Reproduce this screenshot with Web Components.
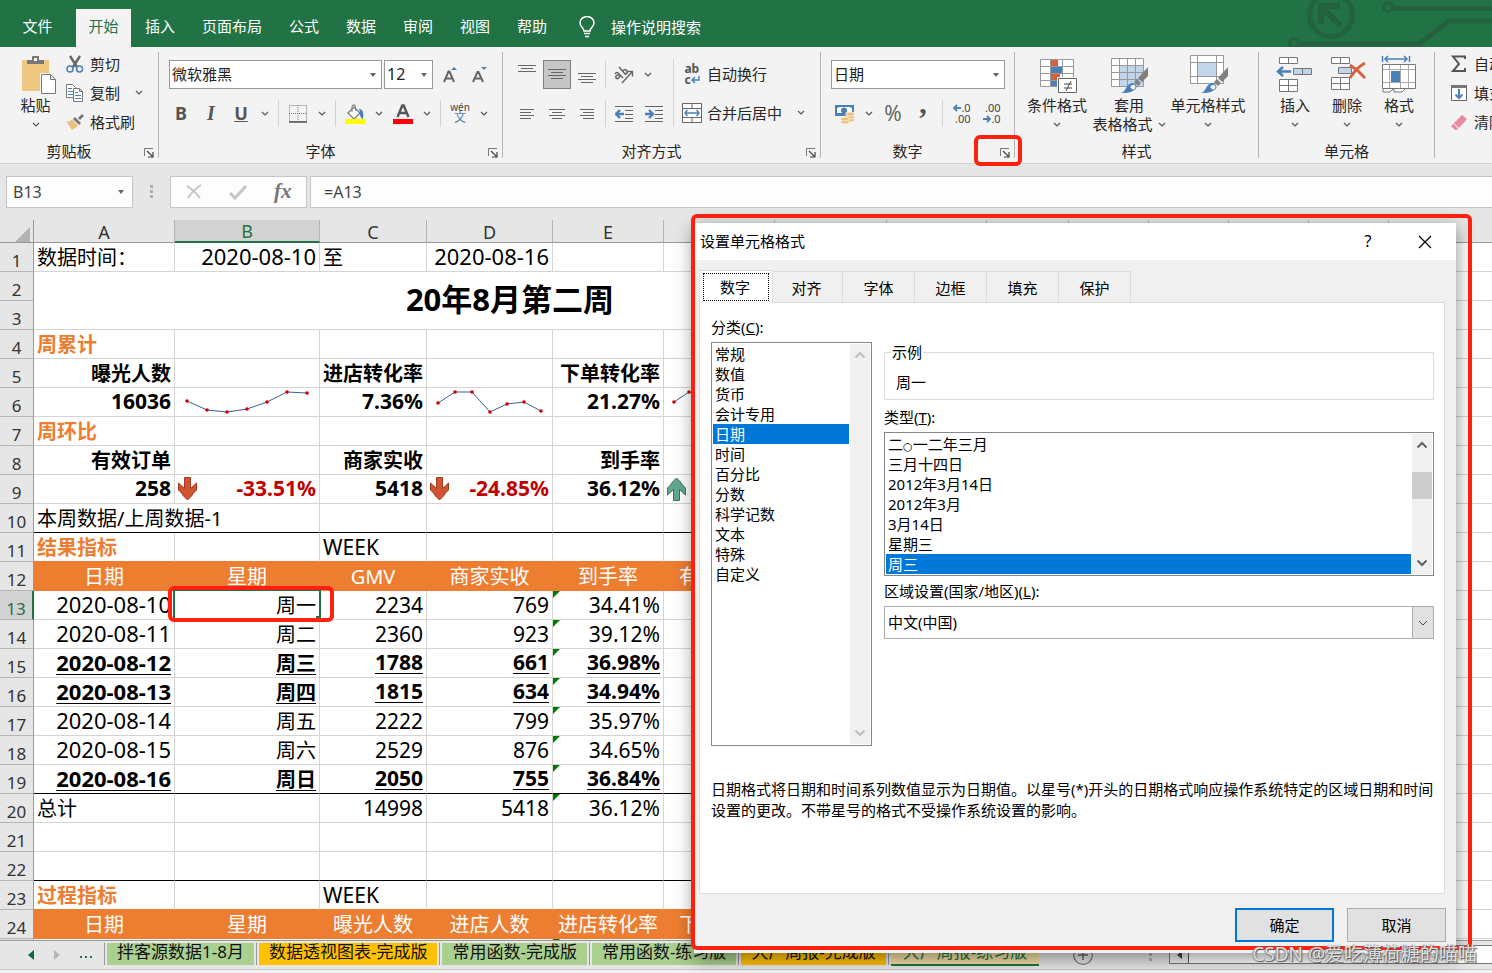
<!DOCTYPE html>
<html lang="zh-CN">
<head>
<meta charset="utf-8">
<title>Excel - 设置单元格格式</title>
<style>
html,body{margin:0;height:100%}
body{font:15px/20px "Noto Sans","Noto Sans CJK SC",sans-serif;color:#262626;overflow:hidden;background:#e6e6e6}
</style>
</head>
<body>
<excel-window></excel-window>
<script>
const BASE = `*{box-sizing:border-box}
button,input,select{font:inherit;color:inherit;margin:0;padding:0;border:0;background:none;border-radius:0;outline:0;appearance:none;line-height:inherit}
button{display:inline-flex;align-items:center;justify-content:center;white-space:nowrap}`;

class Base extends HTMLElement {
  connectedCallback() {
    if (this.shadowRoot) return;
    this.attachShadow({mode: 'open'}).innerHTML = `<style>${BASE}${this.css()}</style>${this.html()}`;
  }
  a(n, d = '') { return this.getAttribute(n) ?? d; }
  css() { return ''; }
  html() { return '<slot></slot>'; }
}

/* ---------- icons ---------- */
const lines = (list, c = '#666') => list.map(([x, y, w]) => `<path d="M${x} ${y + .5}h${w}" stroke="${c}"/>`).join('');
const brush = (x, y) => `<g transform="translate(${x} ${y})"><path d="M27 0v9l-6 6-4-4z" fill="#808080"/><path d="M16 12l4 4-3 3-4-4z" fill="#808080"/><path d="M0 26c5-1 5-9 11-10 4 0 5 4 3 6-3 4-9 4-14 4z" fill="#4a7fb8"/><path d="M9 20c0-3 6-4 6 0 0 2-2 3-3 3" fill="#f3f3f3" stroke="#4a7fb8"/></g>`;
const ICONS = {
  chev: [8, 5, `<path d="M1 1l3 3 3-3" fill="none" stroke="#555" stroke-width="1.2"/>`],
  caret: [8, 4, `<path d="M1 0h6l-3 4z" fill="#666"/>`],
  bulb: [16, 22, `<path d="M5 15c0-3-4-4-4-8a7 6.500 0 0 1 14 0c0 4-4 5-4 8zM5 17.500h6M6 20.500h4" fill="none" stroke="#fff" stroke-width="1.500"/>`],
  paste: [41, 40, `<g transform="translate(5 0)"><path d="M2 5h27v31H2z" fill="#edc87e"/><path d="M7 5h5V2q0-1 1-1h5q1 0 1 1v3h5v4H7z" fill="#777"/><path d="M14 3h3v3h-3z" fill="#f3f3f3"/><path d="M20 18h11l6 6v16H20z" fill="#f3f3f3"/><path d="M21.500 19.500h9l5 5v14h-14zM30.500 19.500v5h5" fill="#fff" stroke="#777"/></g>`],
  cut: [18, 18, `<path d="M4 1l7 11M14 1L7 12" stroke="#666" stroke-width="2.400" fill="none"/><circle cx="4" cy="14" r="3" fill="none" stroke="#4a7fb8" stroke-width="1.500"/><circle cx="13.500" cy="14" r="3" fill="none" stroke="#4a7fb8" stroke-width="1.500"/>`],
  copy: [18, 18, `<path d="M.5.5h6l3 3v10h-9z" fill="#fff" stroke="#777"/><path d="M2 4.500h4M2 7.500h5M2 10.500h5" stroke="#4a7fb8"/><path d="M7.500 4.500h6l3 3v10h-9zM13.500 4.500v3h3" fill="#fff" stroke="#777"/><path d="M9 8.500h3M9 11.500h6M9 14.500h6" stroke="#4a7fb8"/>`],
  brush: [18, 16, `<path d="M9 3l6 6-2 2-6-6z" fill="#777"/><path d="M12 4l4-4 2 2-4 4z" fill="#777"/><path d="M6 5l6 7c-2 1-4 3-6 4L0 7c3 1 5 0 6-2z" fill="#edc07a"/>`],
  grow: [16, 18, `<path d="M3 16L7.500 5.500h1L13 16M4.500 12.500h7" fill="none" stroke="#666" stroke-width="2"/><path d="M10 4l3-3 3 3z" fill="#4a7fb8"/>`],
  shrink: [16, 18, `<path d="M2 16L6.500 6h1L12 16M3.500 12.500h7" fill="none" stroke="#666" stroke-width="2"/><path d="M10 1h6l-3 3z" fill="#4a7fb8"/>`],
  border: [18, 18, `<path d="M.5.5h17v16H.5zM9 0v16M0 8.500h18" fill="none" stroke="#777" stroke-dasharray="1 1"/><path d="M0 17h18" stroke="#555" stroke-width="1.500"/>`],
  fill: [20, 20, `<path d="M3 9l6-6 6 6-6 6z" fill="#fff" stroke="#777" stroke-width="1.200"/><path d="M7 8V3q0-3 3-2l1 6" fill="none" stroke="#777"/><path d="M14 5c4 0 5 4 4 10-2-1-4-4-3-7z" fill="#4a7fb8"/><path d="M0 15h20v5H0z" fill="#ff0"/>`],
  color: [20, 20, `<path d="M4.500 13L9.300 1.500h1.400L15.500 13M6 9h8" fill="none" stroke="#555" stroke-width="2.400"/><path d="M0 15h20v5H0z" fill="red"/>`],
  top: [18, 30, lines([[0, 5, 18], [3, 8, 12], [0, 11, 18]])],
  middle: [18, 30, lines([[0, 9, 18], [3, 12, 12], [0, 15, 18], [3, 18, 12]])],
  bottom: [18, 30, lines([[0, 13, 18], [3, 16, 12], [0, 19, 18], [3, 22, 12]])],
  left: [14, 12, lines([[0, 1, 14], [0, 4, 11], [0, 7, 14], [0, 10, 11]])],
  center: [16, 12, lines([[0, 1, 16], [3, 4, 10], [0, 7, 16], [3, 10, 10]])],
  right: [14, 12, lines([[0, 1, 14], [3, 4, 11], [0, 7, 14], [3, 10, 11]])],
  orient: [20, 18, `<path d="M8 17L18 6M18.500 10.500V5.500H13.500" fill="none" stroke="#666" stroke-width="1.400"/><g fill="none" stroke="#666" stroke-width="1.600"><path d="M1 8q2-3 4 0l4 4M5 9q-4 0-3 3 2 2 4-2"/><path d="M5 1l7 8M9 5q2-3 4 0 1 3-2 3"/></g>`],
  outdent: [18, 18, lines([[0, 1, 18], [10, 5, 8], [10, 9, 8], [10, 13, 8], [0, 16, 18]]) + `<path d="M9 9H2M5 5L1 9l4 4" fill="none" stroke="#4a7fb8" stroke-width="2.400"/>`],
  indent: [18, 18, lines([[0, 1, 18], [10, 5, 8], [10, 9, 8], [10, 13, 8], [0, 16, 18]]) + `<path d="M0 9h7M4 5l4 4-4 4" fill="none" stroke="#4a7fb8" stroke-width="2.400"/>`],
  ret: [9, 8, `<path d="M8 0v4H1M4 1L1 4l3 3" fill="none" stroke="#4a7fb8" stroke-width="1.400"/>`],
  merge: [20, 20, `<path d="M.5.500h19v19H.5zM.5 5.500h19M.5 14.500h19M10 0v5M10 15v5" fill="#fff" stroke="#666"/><path d="M3 10h14M5.500 7L3 10l2.500 3M14.500 7l2.500 3-2.500 3" fill="none" stroke="#4a7fb8" stroke-width="1.400"/>`],
  money: [20, 20, `<path d="M0 1h19v11H0z" fill="#4a7fb8"/><path d="M2 4l3-1h9l3 1v5H2z" fill="#fff"/><circle cx="9" cy="6.500" r="3" fill="#4a7fb8"/><g fill="#edc07a" stroke="#fff" stroke-width=".7"><ellipse cx="15" cy="16" rx="4.500" ry="2"/><ellipse cx="15" cy="13" rx="4.500" ry="2"/><ellipse cx="15" cy="10" rx="4.500" ry="2"/><ellipse cx="10" cy="18" rx="4.500" ry="2"/><ellipse cx="10" cy="15" rx="4.500" ry="2"/></g>`],
  arrL: [8, 8, `<path d="M8 4H1M4 1L1 4l3 3" fill="none" stroke="#4a7fb8" stroke-width="1.800"/>`],
  arrR: [8, 8, `<path d="M0 4h7M4 1l3 3-3 3" fill="none" stroke="#4a7fb8" stroke-width="1.800"/>`],
  launch: [10, 10, `<path d="M.5 8V.5H9" fill="none" stroke="#777"/><path d="M3 3l6 6M9 4v5H4" fill="none" stroke="#444" stroke-width="1.200"/>`],
  cond: [42, 38, `<g transform="translate(4 0)"><path d="M.5 4.500h33v27H.5z" fill="#fff"/><path d="M11 5h7v6h-7zM11 19h9v6h-9z" fill="#d6603a"/><path d="M11 12h11v6H11zM11 26h6v5h-6z" fill="#4a7fb8"/><path d="M.5 4.500h33v27H.5zM.5 11.500h33M.5 18.500h33M.5 25.500h33M10.500 4v27M22.500 4v27" fill="none" stroke="#999"/><path d="M17 22h20v16H17z" fill="#f3f3f3"/><path d="M18.500 23.500h18v14h-18z" fill="#fff" stroke="#666"/><path d="M24 29h8M24 33h8M31 26l-5 10" stroke="#444"/></g>`],
  table: [38, 38, `<g transform="translate(1 0)"><path d="M.5 3.500h32v28H.5z" fill="#fff"/><path d="M9 11h23v20H9z" fill="#c3d5ea"/><path d="M.5 3.500h32v28H.5zM.5 10.500h32M.5 17.500h32M.5 24.500h32M8.500 3v28M16.500 3v28M24.500 3v28" fill="none" stroke="#999"/>${brush(10, 12)}</g>`],
  cell: [40, 38, `<g transform="translate(2 0)"><path d="M.5.500h33v28H.5zM.5 7.500h33M.5 21.500h33M7.500 0v28M26.500 0v28" fill="#fff" stroke="#999"/><path d="M8 8h18v13H8z" fill="#c3d5ea"/>${brush(11, 12)}</g>`],
  insert: [38, 38, `<path d="M3.500 2.500h18v6h-18zM12.500 2v6M3.500 24.500h18v12h-18zM12.500 24v12M3.500 30.500h18" fill="#fff" stroke="#777"/><path d="M17.500 13.500h18v6h-18zM26.500 13v6" fill="#c3d5ea" stroke="#777"/><path d="M15 16.500H3M7 12l-5 4.500L7 21" fill="none" stroke="#4a7fb8" stroke-width="2.500"/>`],
  del: [38, 38, `<path d="M3.500 2.500h18v6h-18zM12.500 2v6M3.500 22.500h18v12h-18zM12.500 22v12M3.500 28.500h18" fill="#fff" stroke="#777"/><path d="M10.500 12.500h13v6h-13z" fill="#c3d5ea" stroke="#777"/><path d="M22 10q8 5 15 13M37 8q-9 5-15 15" fill="none" stroke="#d6603a" stroke-width="2.800"/>`],
  format: [38, 38, `<path d="M2.500 1v6M29.500 1v6M5 4h22M8 1L5 4l3 3M24 1l3 3-3 3" fill="none" stroke="#4a7fb8" stroke-width="1.500"/><path d="M2.500 9.500h33v24h-33z" fill="#fff"/><path d="M2.500 14.500h33M2.500 27.500h33M9.500 9v24M20.500 9v24M28.500 9v24" stroke="#aaa"/><path d="M2.500 9.500h33v24h-33z" fill="none" stroke="#777"/><path d="M11 16h9v11h-9z" fill="#4a7fb8"/><path d="M3 34v3h7l3-3h1v3h8l3-3" fill="#fff" stroke="#777"/>`],
  sum: [18, 18, `<path d="M15 4V1.500H3L9 9l-6 7h12v-3" fill="none" stroke="#555" stroke-width="2"/>`],
  down: [18, 18, `<path d="M1.500 1.500h15v15h-15z" fill="#fff" stroke="#666"/><path d="M1 1h16v3H1z" fill="#777"/><path d="M9 5v9M5.500 10.500L9 14l3.500-3.500" fill="none" stroke="#4a7fb8" stroke-width="2"/>`],
  eraser: [18, 18, `<path d="M12 2l5 4-8 9-5-5z" fill="#e98a9d"/><path d="M3.500 10.500l4.500 5-2 2-5-4z" fill="#e98a9d"/>`],
  cancel: [16, 16, `<path d="M1 2q8 5 13 12M15 1Q7 6 2 14" fill="none" stroke="#c4c4c4" stroke-width="2"/>`],
  ok: [18, 16, `<path d="M1 9l5 5L17 2" fill="none" stroke="#c4c4c4" stroke-width="3"/>`],
  dots: [3, 14, `<path d="M0 0h3v3H0zM0 5h3v3H0zM0 10h3v3H0z" fill="#b0b0b0"/>`],
  navL: [6, 10, `<path d="M6 0v10L0 5z" fill="#0f6b3a"/>`],
  navR: [6, 10, `<path d="M0 0v10l6-5z" fill="#b8b8b8"/>`],
  more: [13, 6, `<path d="M0 4h2v2H0zM5 4h2v2H5zM10 4h2v2h-2z" fill="#217346"/>`],
  plus: [20, 20, `<circle cx="10" cy="10" r="9.300" fill="none" stroke="#777" stroke-width="1.200"/><path d="M10 5v10M5 10h10" stroke="#666" stroke-width="1.500"/>`],
  scrollL: [5, 8, `<path d="M5 0v8L0 4z" fill="#444"/>`],
  close: [14, 14, `<path d="M1 1l12 12M13 1L1 13" stroke="#000" stroke-width="1.200"/>`],
  upOff: [12, 8, `<path d="M1.500 6.500L6 2l4.500 4.500" fill="none" stroke="#bfbfbf" stroke-width="2"/>`],
  downOff: [12, 8, `<path d="M1.500 1.500L6 6l4.500-4.500" fill="none" stroke="#bfbfbf" stroke-width="2"/>`],
  up: [12, 8, `<path d="M1.500 6.500L6 2l4.500 4.500" fill="none" stroke="#606060" stroke-width="2"/>`],
  dn: [12, 8, `<path d="M1.500 1.500L6 6l4.500-4.500" fill="none" stroke="#606060" stroke-width="2"/>`],
  combo: [10, 6, `<path d="M1 1l4 4 4-4" fill="none" stroke="#444"/>`],
  fall: [20, 24, `<path d="M6.500.5h6v11L18.500 6v7l-3 3-2 3-4 4-4-4-2-3-3-3V6l6 5.500z" fill="#d35230" stroke="#9e3d24"/>`],
  rise: [20, 24, `<path d="M6.500 23.500h6v-11L18.500 18v-7l-3-3-2-3-4-4-4 4-2 3-3 3v7l6-5.500z" fill="#64a78e" stroke="#37765e"/>`]
};
customElements.define('x-icon', class extends Base {
  css() { return ':host{display:inline-flex;flex:none}svg{display:block}'; }
  html() { const [w, h, d] = ICONS[this.a('name')]; return `<svg width="${w}" height="${h}" viewBox="0 0 ${w} ${h}" aria-hidden="true">${d}</svg>`; }
});

/* ---------- ribbon parts ---------- */
customElements.define('x-tool', class extends Base {
  css() { return `:host{display:inline-flex;flex:none;width:28px;height:29px}
    button{width:100%;height:100%}
    :host([label]:not([icon])) button{padding-bottom:2px}
    :host([pressed]) button{background:#c6c6c6;border:1px solid #808080}
    :host([drop]){width:16px}`; }
  html() { return `<button aria-label="${this.a('label')}">${this.hasAttribute('drop') ? '<x-icon name="chev"></x-icon>' : this.a('icon') ? `<x-icon name="${this.a('icon')}"></x-icon>` : '<slot></slot>'}</button>`; }
});
customElements.define('x-sep', class extends Base {
  css() { return ':host{display:block;flex:none;width:1px;height:27px;margin:0 3px;background:#d2d2d2}'; }
  html() { return ''; }
});
customElements.define('x-row-tool', class extends Base {
  css() { return `:host{display:flex;height:29px;align-items:center}
    button{gap:6px;height:100%;padding-bottom:2px}.i{width:18px;display:flex;justify-content:center}.c{margin-left:9px}`; }
  html() { return `<button><span class="i"><slot name="icon"><x-icon name="${this.a('icon', 'chev')}"></x-icon></slot></span><slot></slot>${this.hasAttribute('menu') ? '<x-icon class="c" name="chev"></x-icon>' : ''}</button>`; }
});
customElements.define('x-big', class extends Base {
  css() { return `:host{display:block;flex:none}
    button{flex-direction:column;justify-content:flex-start;width:100%;padding-top:5px}
    .i{height:40px;display:flex;align-items:flex-start}
    .second{display:flex;align-items:center;gap:5px;height:18px}`; }
  html() { return `<button><span class="i"><x-icon name="${this.a('icon')}"></x-icon></span><span><slot></slot></span><span class="second"><slot name="second"></slot><x-icon name="chev"></x-icon></span></button>`; }
});
customElements.define('x-combo', class extends Base {
  css() { return `:host{display:block;flex:none;position:relative;height:29px}
    select{width:100%;height:100%;background:#fff;border:1px solid #999;padding:0 20px 2px 2px;color:#222}
    x-icon{position:absolute;right:5px;top:13px;pointer-events:none}`; }
  html() { return `<select aria-label="${this.a('label')}"><option>${this.a('value')}</option></select><x-icon name="caret"></x-icon>`; }
});
customElements.define('x-mark', class extends Base {
  css() { return ':host{display:block;position:absolute;border:4px solid #ff2010;border-radius:6px;pointer-events:none;z-index:3}'; }
  html() { return ''; }
});
customElements.define('x-group', class extends Base {
  css() { return `:host{display:grid;grid-template-rows:87px 26px;flex:none;padding-top:3px;position:relative}
    :host::after{content:"";position:absolute;right:0;top:5px;bottom:5px;width:1px;background:#b5b5b5}
    :host([last])::after{display:none}
    .foot{display:flex;align-items:center}
    .foot span{flex:1;text-align:center;padding:2px 1px 0 0}
    .foot button{width:20px;height:20px;position:relative;padding-top:5px}
    x-mark{inset:-5px -7px -6px -21px}`; }
  html() { return `<slot></slot><div class="foot"><span>${this.a('label')}</span>${this.hasAttribute('launcher') ? `<button aria-label="${this.a('label')}设置"><x-icon name="launch"></x-icon>${this.hasAttribute('marked') ? '<x-mark></x-mark>' : ''}</button>` : ''}</div>`; }
});

customElements.define('excel-tabs', class extends Base {
  css() { return `:host{display:flex;height:47px;flex:none;background:#217346;color:#fff;padding-top:9px;position:relative;overflow:hidden}
    nav{display:flex;gap:1px}
    button{padding:0 13px 4px;height:38px}
    .file{width:75px}.on{background:#f3f3f3;color:#217346;width:55px}
    .tell{margin-left:19px;padding:0 0 3px;gap:16px}
    .art{position:absolute;right:0;top:0}`; }
  html() { return `<svg class="art" width="212" height="47" viewBox="0 0 212 47" fill="none" stroke="#23613f" stroke-width="5" aria-hidden="true"><circle cx="51" cy="15" r="21.500"/><path d="M41 24V6h19M43 8l17 18" stroke-width="6"/><circle cx="108" cy="7" r="4.500" stroke-width="3"/><path d="M113 8.500h99"/><circle cx="14" cy="43" r="4.500" stroke-width="3"/><path d="M19 44h120l30-23h43" stroke-width="5"/></svg>
    <nav><button class="file">文件</button><button class="on">开始</button>${['插入', '页面布局', '公式', '数据', '审阅', '视图', '帮助'].map(t => `<button>${t}</button>`).join('')}</nav>
    <button class="tell"><x-icon name="bulb"></x-icon>操作说明搜索</button>`; }
});

customElements.define('excel-ribbon', class extends Base {
  css() { return `:host{display:flex;flex:none;height:117px;background:#f3f3f3;border-bottom:1px solid #d2d2d2;overflow:visible}
    .clip{width:159px}.font{width:344px}.align{width:318px}.num{width:194px}.sty{width:244px}.cells{width:176px}.edit{flex:1;min-width:0;overflow:hidden}
    .h{display:flex}.stack{display:flex;flex-direction:column}
    .tools{display:grid;grid-template-rows:29px 29px;row-gap:10px;padding-top:10px;align-content:start}
    .r{display:flex;align-items:center;gap:2px}
    .clip .h{padding-left:10px;gap:5px}
    .paste{width:51px}
    .font .tools{padding-left:8px}.font .r:first-child{padding-left:2px}
    .name{width:213px}.size{width:49px;font-size:16px}
    .align .h{padding-left:10px}.align x-sep{margin:0 2px}.align x-sep.tall{height:68px;margin:9px 9px 0 5px}
    .num .tools{padding-left:10px}.fmt{width:174px}
    .sty .h{padding-left:7px}.w70{width:70px}.w74{width:74px;margin-right:2px}.w80{width:80px}
    .cells .h{padding-left:10px}.cells x-big{width:52px}
    .edit .stack{padding-left:15px}
    b,i,u{font-size:18px;color:#555;font-weight:700}
    i{font-family:"Liberation Serif",serif;font-size:20px}
    .pct{font-size:21px;color:#666}.comma{font:700 30px/20px "Liberation Serif",serif;color:#555;padding-bottom:20px}
    .dec{font-size:11px;line-height:11px;color:#444;text-align:right}
    .wen{font-size:10px;line-height:10px;color:#444;text-align:center}.wen em{display:block;font-style:normal;font-size:12px;line-height:12px;color:#4a7fb8}
    .ab{font-size:12px;line-height:11px;color:#555;text-align:left;font-weight:700}`; }
  html() { return `
  <x-group class="clip" label="剪贴板" launcher><div class="h"><x-big class="paste" icon="paste">粘贴</x-big>
    <div class="stack"><x-row-tool icon="cut">剪切</x-row-tool><x-row-tool icon="copy" menu>复制</x-row-tool><x-row-tool icon="brush">格式刷</x-row-tool></div></div></x-group>
  <x-group class="font" label="字体" launcher><div class="tools">
    <div class="r"><x-combo class="name" label="字体" value="微软雅黑"></x-combo><x-combo class="size" label="字号" value="12"></x-combo><x-tool icon="grow" label="增大字号"></x-tool><x-tool icon="shrink" label="减小字号"></x-tool></div>
    <div class="r"><x-tool label="加粗"><b>B</b></x-tool><x-tool label="倾斜"><i>I</i></x-tool><x-tool label="下划线"><u>U</u></x-tool><x-tool drop></x-tool><x-sep></x-sep><x-tool icon="border" label="边框"></x-tool><x-tool drop></x-tool><x-sep></x-sep><x-tool icon="fill" label="填充颜色"></x-tool><x-tool drop></x-tool><x-tool icon="color" label="字体颜色"></x-tool><x-tool drop></x-tool><x-sep></x-sep><x-tool label="拼音"><span class="wen">wén<em>文</em></span></x-tool><x-tool drop></x-tool></div>
  </div></x-group>
  <x-group class="align" label="对齐方式" launcher><div class="h"><div class="tools">
    <div class="r"><x-tool icon="top" label="顶端对齐"></x-tool><x-tool icon="middle" label="垂直居中" pressed></x-tool><x-tool icon="bottom" label="底端对齐"></x-tool><x-sep></x-sep><x-tool icon="orient" label="方向"></x-tool><x-tool drop></x-tool></div>
    <div class="r"><x-tool icon="left" label="左对齐"></x-tool><x-tool icon="center" label="居中"></x-tool><x-tool icon="right" label="右对齐"></x-tool><x-sep></x-sep><x-tool icon="outdent" label="减少缩进"></x-tool><x-tool icon="indent" label="增加缩进"></x-tool></div></div>
    <x-sep class="tall"></x-sep>
    <div class="tools"><x-row-tool><span slot="icon" class="ab">ab<br>c<x-icon name="ret"></x-icon></span>自动换行</x-row-tool><x-row-tool icon="merge" menu>合并后居中</x-row-tool></div></div></x-group>
  <x-group class="num" label="数字" launcher marked><div class="tools">
    <div class="r"><x-combo class="fmt" label="数字格式" value="日期"></x-combo></div>
    <div class="r"><x-tool icon="money" label="会计格式"></x-tool><x-tool drop></x-tool><x-tool label="百分比"><span class="pct">%</span></x-tool><x-tool label="千位分隔"><span class="comma">,</span></x-tool><x-sep></x-sep><x-tool label="增加小数位"><span class="dec"><x-icon name="arrL"></x-icon>.0<br>.00</span></x-tool><x-tool label="减少小数位"><span class="dec">.00<br><x-icon name="arrR"></x-icon>.0</span></x-tool></div></div></x-group>
  <x-group class="sty" label="样式"><div class="h"><x-big class="w70" icon="cond">条件格式</x-big><x-big class="w74" icon="table">套用<span slot="second">表格格式</span></x-big><x-big class="w80" icon="cell">单元格样式</x-big></div></x-group>
  <x-group class="cells" label="单元格"><div class="h"><x-big icon="insert">插入</x-big><x-big icon="del">删除</x-big><x-big icon="format">格式</x-big></div></x-group>
  <x-group class="edit" last><div class="stack"><x-row-tool icon="sum">自动求和</x-row-tool><x-row-tool icon="down">填充</x-row-tool><x-row-tool icon="eraser">清除</x-row-tool></div></x-group>`; }
});

customElements.define('excel-formula', class extends Base {
  css() { return `:host{display:flex;flex:none;height:56px;padding:12px 0 0 6px;color:#444;font-size:16px}
    .box{height:32px;background:#fdfdfd;border:1px solid #c6c6c6;display:flex;align-items:center}
    .name{width:127px;padding:0 7px 0 6px}.name input{width:100%;min-width:0}
    .grip{margin:9px 17px 0 17px}
    .btns{width:137px;justify-content:space-around;padding:0 1px;margin-right:3px}
    .fx{font:italic 700 21px/24px "Liberation Serif",serif;color:#777;padding-bottom:2px}
    .f{flex:1;border-right:0;padding-left:13px}.f input{width:100%}`; }
  html() { return `<div class="box name"><input aria-label="名称框" value="B13"><x-icon name="caret"></x-icon></div><x-icon class="grip" name="dots"></x-icon>
    <div class="box btns"><button aria-label="取消"><x-icon name="cancel"></x-icon></button><button aria-label="输入"><x-icon name="ok"></x-icon></button><button class="fx">fx</button></div>
    <div class="box f"><input aria-label="编辑栏" value="=A13"></div>`; }
});

/* ---------- worksheet ---------- */
const spark = pts => `<svg class="spark" width="108" height="28" viewBox="0 0 108 28" overflow="visible" aria-hidden="true"><polyline points="${pts.map(p => p.join()).join(' ')}" fill="none" stroke="#376092"/>${pts.map(([x, y]) => `<circle cx="${x}" cy="${y}" r="1.800" fill="#d00000"/>`).join('')}</svg>`;
customElements.define('excel-sheet', class extends Base {
  css() { return `:host{display:block;flex:1;min-height:0;overflow:hidden;background:#fff;color:#000;font-size:21px;line-height:28px}
    table{table-layout:fixed;border-collapse:separate;border-spacing:0;width:100%}
    thead th{height:23px;background:#e6e6e6;border-right:1px solid #b5b5b5;border-bottom:1px solid #999;font-weight:400;font-size:18px;line-height:20px;padding:2px 0 0;color:#333}
    thead th.sel{background:#d2d2d2;color:#217346;border-bottom:2px solid #217346;padding:1px 0 0}
    thead th:first-child{border-color:#b5b5b5 #999 #999;}
    .corner{display:block;margin:4px 0 0 15px}
    tbody th{background:#e6e6e6;border-right:1px solid #999;border-bottom:1px solid #b5b5b5;font-weight:400;font-size:17px;line-height:20px;color:#333;padding:8px 0 0;height:29px}
    tbody th.sel{background:#d2d2d2;color:#217346;border-right:2px solid #217346}
    td{height:29px;padding:0 3px;border-right:1px solid #d4d4d4;border-bottom:1px solid #d4d4d4;text-align:right;white-space:nowrap;position:relative;vertical-align:top}
    tr>:last-child{border-right:0}
    .l{text-align:left}.d{font-size:22px;line-height:26px}
    .b,.u{font-weight:700;line-height:26px}
    .u{text-decoration:underline;text-decoration-thickness:1px;text-underline-offset:3px}
    .zh,.o{font-size:20px;line-height:26px;padding-top:2px}
    .t{font-size:31px;font-weight:700;text-align:center;line-height:54px}
    .o{color:#ed7d31;font-weight:700}.neg{color:#c00000}
    .black td{border-bottom-color:#000}.pre td.k{border-bottom-color:#ed7d31}
    .hd td.k{background:#ed7d31;border-color:#ed7d31;color:#fff;text-align:center}
    td.plain{border-bottom-color:#d4d4d4}
    .spark,.ic{position:absolute;left:0;top:0}.ic{left:3px;top:2px}
    .err::before{content:"";position:absolute;left:0;top:0;border-top:7px solid #007a00;border-right:7px solid transparent}
    .cur{position:absolute;inset:-2px;border:2px solid #217346}
    .cur::after{content:"";position:absolute;right:-2px;bottom:-2px;width:5px;height:5px;background:#217346}
    x-mark{inset:-5px -15px -3px -7px}`; }
  html() {
    const widths = [34, 141, 145, 107, 126, 111, 111, 112, 100, 82, 80, 80, 80, 80, 80];
    const N = 15;
    const c = (t = '', k = '', x = '') => ({t, k, x});
    const day = (d, w, g, s, p, u) => [c('2020-08-' + d, 'd' + (u ? ' u' : '')), c(w, 'zh' + (u ? ' u' : '')), c(g, u ? 'u' : ''), c(s, u ? 'u' : ''), c(p, 'err' + (u ? ' u' : ''))];
    const rows = {
      1: [c('数据时间：', 'l zh'), c('2020-08-10', 'd'), c('至', 'l zh'), c('2020-08-16', 'd')],
      4: [c('周累计', 'l o')],
      5: [c('曝光人数', 'b zh'), c(), c('进店转化率', 'b zh'), c(), c('下单转化率', 'b zh')],
      6: [c('16036', 'b'), c(spark([[12, 13], [32, 22], [52, 24], [72, 21], [92, 14], [112, 4], [132, 5]])), c('7.36%', 'b'), c(spark([[11, 15], [28, 4], [45, 4], [63, 24], [80, 16], [97, 14], [114, 23]])), c('21.27%', 'b'), c(spark([[10, 14], [25, 4], [40, 12]]))],
      7: [c('周环比', 'l o')],
      8: [c('有效订单', 'b zh'), c(), c('商家实收', 'b zh'), c(), c('到手率', 'b zh')],
      9: [c('258', 'b'), c('<x-icon class="ic" name="fall"></x-icon>-33.51%', 'b neg'), c('5418', 'b'), c('<x-icon class="ic" name="fall"></x-icon>-24.85%', 'b neg'), c('36.12%', 'b'), c('<x-icon class="ic" name="rise"></x-icon>')],
      10: [c('本周数据/上周数据-1', 'l zh', 'colspan="2"')],
      11: [c('结果指标', 'l o'), c(), c('WEEK', 'l')],
      12: ['日期', '星期', 'GMV', '商家实收', '到手率', '有效订单'].map(t => c(t, 'zh')),
      13: day(10, '周一', 2234, 769, '34.41%'),
      14: day(11, '周二', 2360, 923, '39.12%'),
      15: day(12, '周三', 1788, 661, '36.98%', 1),
      16: day(13, '周四', 1815, 634, '34.94%', 1),
      17: day(14, '周五', 2222, 799, '35.97%'),
      18: day(15, '周六', 2529, 876, '34.65%'),
      19: day(16, '周日', 2050, 755, '36.84%', 1),
      20: [c('总计', 'l zh'), c(), c('14998'), c('5418'), c('36.12%', 'err')],
      23: [c('过程指标', 'l o'), c(), c('WEEK', 'l')],
      24: ['日期', '星期', '曝光人数', '进店人数', '进店转化率', '下单人数'].map(t => c(t, 'zh')),
      25: [c(), c(), c(), c(), c('', 'err')]
    };
    rows[13][1].t += '<span class="cur"></span><x-mark></x-mark>';
    let body = '';
    for (let r = 1; r <= 25; r++) {
      const cls = [10, 19, 22].includes(r) ? 'black' : [11, 23].includes(r) ? 'pre' : [12, 24].includes(r) ? 'hd' : '';
      let cells = '', list = rows[r] || [], col = 0;
      if (r === 2) { cells = '<td class="t" colspan="8" rowspan="2">20年8月第二周</td>'; col = 8; }
      if (r === 3) col = 8;
      for (let i = 0; col < N; i++) {
        const x = list[i] || c();
        cells += `<td class="${x.k} ${col < 8 ? 'k' : 'plain'}" ${x.x}>${x.t}</td>`;
        col += x.x ? 2 : 1;
      }
      body += `<tr class="${cls}"><th${r === 13 ? ' class="sel"' : ''}>${r < 25 ? r : ''}</th>${cells}</tr>`;
    }
    return `<table><colgroup>${widths.map(w => `<col style="width:${w}px">`).join('')}<col></colgroup>
      <thead><tr><th><svg class="corner" width="15" height="15" viewBox="0 0 15 15" aria-hidden="true"><path d="M15 0v15H0z" fill="#b2b2b2"/></svg></th>${Array.from({length: N}, (_, i) => `<th${i === 1 ? ' class="sel"' : ''}>${'ABCDE'[i] || ''}</th>`).join('')}</tr></thead><tbody>${body}</tbody></table>`;
  }
});

customElements.define('excel-sheetbar', class extends Base {
  css() { return `:host{display:block;flex:none;height:33px;background:#e6e6e6;border-top:1px solid #999;font-size:17px;line-height:18px;color:#222}
    .bar{display:flex;height:29px;border-bottom:1px solid #c6c6c6;padding-top:2px}
    .nav{display:flex;width:104px;height:23px;align-items:center;padding-left:28px;flex:none;gap:20px}
    .nav button{height:23px}
    .tab{height:22px;align-items:flex-start;padding:0 10px;background:#a9d08e;color:#111;flex:none;margin-right:2px;overflow:hidden}
    .wrap{display:flex;border-left:1px solid #999;padding-left:2px;height:22px;flex:none}
    .y{background:#ffc000}
    .on{background:#f5dfa4;color:#217346;border-bottom:2px solid #217346;margin:0;padding:0 12px;height:23px}
    .add{margin:2px 0 0 34px;align-self:flex-start}
    .grip{margin:5px 17px 0 56px}
    .scroll{flex:1;display:flex;height:19px;margin-top:2px;border:1px solid #777;border-right:0;background:#f0f0f0}
    .scroll button{width:19px;border-right:1px solid #555}.thumb{flex:1;background:#fff}
    .status{height:3px;background:#f3f3f3}`; }
  html() { const t = (n, k = '') => `<span class="wrap"><button class="tab ${k}">${n}</button></span>`;
    return `<div class="bar"><div class="nav"><button aria-label="上一张"><x-icon name="navL"></x-icon></button><button aria-label="下一张"><x-icon name="navR"></x-icon></button><button aria-label="更多工作表"><x-icon name="more"></x-icon></button></div>
    ${t('拌客源数据1-8月')}${t('数据透视图表-完成版', 'y')}${t('常用函数-完成版')}${t('常用函数-练习版')}${t('大厂周报-完成版', 'y')}${t('大厂周报-练习版', 'on')}
    <button class="add" aria-label="新工作表"><x-icon name="plus"></x-icon></button><x-icon class="grip" name="dots"></x-icon><div class="scroll"><button aria-label="向左滚动"><x-icon name="scrollL"></x-icon></button><span class="thumb"></span></div></div><div class="status"></div>`; }
});

/* ---------- dialog ---------- */
customElements.define('x-listbox', class extends Base {
  css() { return `:host{display:flex;border:1px solid #828790;background:#fff;padding:1px}
    ul{list-style:none;margin:0;padding:0;flex:1;min-width:0}
    li{height:20px;line-height:20px;padding-left:2px;white-space:nowrap}
    li[aria-selected=true]{background:#0078d7;color:#fff}
    .ring{font:11px/20px "DejaVu Sans",sans-serif}
    .sb{width:20px;margin-left:1px;background:#f0f0f0;display:flex;flex-direction:column;align-items:center;padding:7px 0}
    .gap{flex:1}.thumb{width:20px;height:27px;background:#cdcdcd;margin:23px 0 auto}`; }
  html() { const on = this.a('value'), off = !this.hasAttribute('scroll');
    return `<ul role="listbox" aria-label="${this.a('label')}">${this.a('items').split('|').map(t => `<li role="option" aria-selected="${t === on}">${t.replace('○', '<span class="ring">○</span>')}</li>`).join('')}</ul>
    <div class="sb"><x-icon name="${off ? 'upOff' : 'up'}"></x-icon><span class="${off ? 'gap' : 'thumb'}"></span><x-icon name="${off ? 'downOff' : 'dn'}"></x-icon></div>`; }
});
customElements.define('format-dialog', class extends Base {
  css() { return `:host{display:flex;flex-direction:column;background:#f0f0f0;color:#000;box-shadow:0 5px 18px rgba(0,0,0,.45)}
    header{display:flex;align-items:center;height:37px;background:#fff;padding:0 24px 0 6px}
    h1{font:inherit;margin:0;flex:1;padding-bottom:2px}
    header button{width:14px}.help{margin-right:43px;font-size:16px;padding-bottom:2px}
    .tabs{display:flex;align-items:flex-end;padding:9px 0 0 5px;height:42px}
    .tabs button{width:72px;height:31px;border:1px solid #dcdcdc;border-left:0;border-bottom:0;padding-top:1px}
    .tabs .on{width:74px;height:33px;background:#fff;border-left:1px solid #dcdcdc;padding:0;margin:0 -2px -1px 0;position:relative}
    .on span{border:1px dotted #000;width:66px;height:28px;padding-right:2px;display:flex;align-items:center;justify-content:center}
    .panel{margin:0 11px 0 5px;background:#fff;border:1px solid #dcdcdc;padding:14px 10px 0 11px;height:592px;display:flex;flex-direction:column}
    .cols{display:grid;grid-template-columns:161px 1fr;column-gap:12px}
    label,.lab{display:block;height:20px;margin-bottom:5px}
    .cat{height:404px}
    fieldset{margin:25px 0 7px;padding:10px 11px;border:1px solid #dcdcdc;height:58px;min-width:0}
    legend{padding:0 1px;margin-left:-5px;height:20px}
    output{display:block}
    .type{height:144px;margin-bottom:5px}
    .sel{position:relative}
    select{width:100%;height:33px;border:1px solid #adadad;background:#fff;padding:0 0 2px 3px;display:block}
    .drop{position:absolute;right:0;top:0;width:22px;height:33px;border:1px solid #adadad;background:#e1e1e1;display:flex;align-items:center;justify-content:center;pointer-events:none}
    p{margin:33px 0 0;line-height:21px;white-space:nowrap}
    footer{display:flex;justify-content:flex-end;gap:13px;padding:14px 10px 0 0}
    footer button{width:99px;height:34px;background:#e1e1e1;border:1px solid #adadad;padding-bottom:1px}
    footer .ok{border:2px solid #0078d7}
    x-mark{inset:-9px -16px 3px -3px}`; }
  html() { return `<header><h1>设置单元格格式</h1><button class="help">?</button><button aria-label="关闭"><x-icon name="close"></x-icon></button></header>
    <div class="tabs"><button class="on"><span>数字</span></button>${['对齐', '字体', '边框', '填充', '保护'].map(t => `<button>${t}</button>`).join('')}</div>
    <div class="panel"><div class="cols"><div><span class="lab">分类(<u>C</u>):</span>
      <x-listbox class="cat" label="分类" value="日期" items="常规|数值|货币|会计专用|日期|时间|百分比|分数|科学记数|文本|特殊|自定义"></x-listbox></div>
      <div><fieldset><legend>示例</legend><output>周一</output></fieldset>
      <span class="lab">类型(<u>T</u>):</span><x-listbox class="type" scroll label="类型" value="周三" items="二○一二年三月|三月十四日|2012年3月14日|2012年3月|3月14日|星期三|周三"></x-listbox>
      <label for="loc">区域设置(国家/地区)(<u>L</u>):</label><div class="sel"><select id="loc"><option>中文(中国)</option></select><span class="drop"><x-icon name="combo"></x-icon></span></div></div></div>
      <p>日期格式将日期和时间系列数值显示为日期值。以星号(*)开头的日期格式响应操作系统特定的区域日期和时间<br>设置的更改。不带星号的格式不受操作系统设置的影响。</p></div>
    <footer><button class="ok">确定</button><button>取消</button></footer><x-mark></x-mark>`; }
});

customElements.define('excel-window', class extends Base {
  css() { return `:host{display:flex;flex-direction:column;height:100vh;position:relative;overflow:hidden;background:#e6e6e6}
    format-dialog{position:absolute;right:36px;top:223px;width:762px;height:730px;z-index:5}
    .credit{position:absolute;right:15px;bottom:7px;z-index:6;font-size:19px;line-height:24px;color:rgba(235,235,235,.9);text-shadow:1px 1px 1px #555,-1px 0 1px #888}`; }
  html() { return '<excel-tabs></excel-tabs><excel-ribbon></excel-ribbon><excel-formula></excel-formula><excel-sheet></excel-sheet><excel-sheetbar></excel-sheetbar><format-dialog role="dialog"></format-dialog><span class="credit">CSDN @爱吃薄荷糖的喵喵</span>'; }
});
</script>
</body>
</html>
